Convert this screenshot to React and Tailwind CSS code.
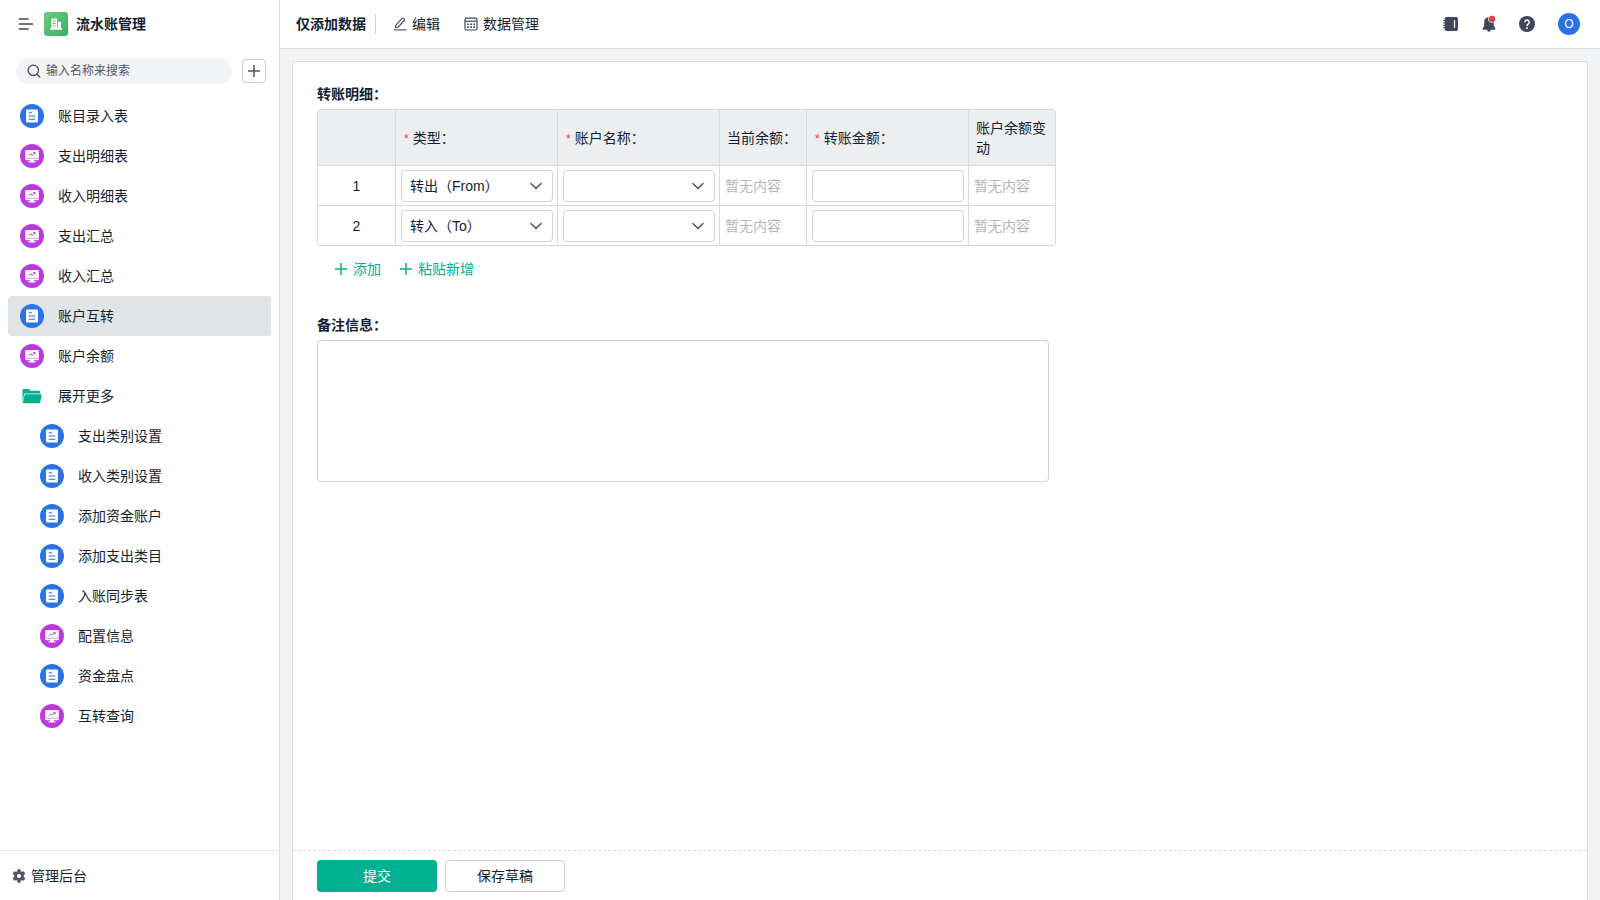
import React from "react";

const menu = [
  { label: "账目录入表", kind: "form" },
  { label: "支出明细表", kind: "board" },
  { label: "收入明细表", kind: "board" },
  { label: "支出汇总", kind: "board" },
  { label: "收入汇总", kind: "board" },
  { label: "账户互转", kind: "form", active: true },
  { label: "账户余额", kind: "board" },
  {
    label: "展开更多",
    kind: "folder",
    children: [
      { label: "支出类别设置", kind: "form" },
      { label: "收入类别设置", kind: "form" },
      { label: "添加资金账户", kind: "form" },
      { label: "添加支出类目", kind: "form" },
      { label: "入账同步表", kind: "form" },
      { label: "配置信息", kind: "board" },
      { label: "资金盘点", kind: "form" },
      { label: "互转查询", kind: "board" },
    ],
  },
];

const rows = [
  { id: 1, type: "转出（From）" },
  { id: 2, type: "转入（To）" },
];

function FormIcon() {
  return (
    <svg viewBox="0 0 24 24" className="size-6 shrink-0" aria-hidden="true">
      <circle cx="12" cy="12" r="12" fill="#2b72e6" />
      <rect x="6" y="5.500" width="12" height="13" rx="1" fill="#fff" />
      <path d="M8.700 8.700h3.300M8.700 12h6.600M8.700 15.300h6.600" stroke="#2b72e6" strokeWidth="1.100" fill="none" />
    </svg>
  );
}

function BoardIcon() {
  return (
    <svg viewBox="0 0 24 24" className="size-6 shrink-0" aria-hidden="true">
      <circle cx="12" cy="12" r="12" fill="#bb3adb" />
      <path
        d="M6.200 6h11.600a1 1 0 0 1 1 1v8.300a1 1 0 0 1-1 1H14v1.200h1.700v1H8.300v-1H10v-1.200H6.200a1 1 0 0 1-1-1V7a1 1 0 0 1 1-1z"
        fill="#fff"
      />
      <path d="M5.200 14.300h13.600" stroke="#bb3adb" strokeWidth=".5" />
      <path d="M8.700 11.700l2.200-1.900 1.500 1.300 2.400-2.300M13.200 8.600h1.900v1.900" stroke="#bb3adb" strokeWidth="1" fill="none" />
    </svg>
  );
}

function FolderIcon() {
  return (
    <svg viewBox="0 0 24 24" className="size-6 shrink-0" aria-hidden="true">
      <path d="M2.500 18V6a1 1 0 0 1 1-1h5.300l1.700 1.800H19a1 1 0 0 1 1 1v1.700H5.200a1.300 1.300 0 0 0-1.200 1z" fill="#00b090" />
      <path d="M5.700 10.300h15a.8.8 0 0 1 .8 1l-1.200 7.200a1 1 0 0 1-1 .8H3.700a.8.8 0 0 1-.8-1l1.700-7.100a1.200 1.200 0 0 1 1.100-.9z" fill="#00b090" />
    </svg>
  );
}

const icons = { form: FormIcon, board: BoardIcon, folder: FolderIcon };

function MenuItem({ item, nested }) {
  const Icon = icons[item.kind];
  return (
    <li>
      <a
        href="#"
        className={
          "flex h-10 items-center gap-3.5 rounded pr-3 " +
          (nested ? "pl-8 " : "pl-3 ") +
          (item.active ? "bg-[#e1e4e7]" : "hover:bg-[#f1f3f4]")
        }
      >
        <Icon />
        <span>{item.label}</span>
      </a>
      {item.children && (
        <ul>
          {item.children.map((child) => (
            <MenuItem key={child.label} item={child} nested />
          ))}
        </ul>
      )}
    </li>
  );
}

function Plus() {
  return (
    <svg viewBox="0 0 14 14" className="size-3.5" aria-hidden="true">
      <path d="M7 1v12M1 7h12" stroke="currentColor" strokeWidth="1.500" fill="none" />
    </svg>
  );
}

function Sidebar() {
  return (
    <aside className="flex w-70 shrink-0 flex-col border-r border-[#dcdfe2] bg-white">
      <div className="flex h-12 items-center pl-4.5">
        <button type="button" aria-label="收起菜单" className="mr-2.5">
          <svg viewBox="0 0 16 16" className="size-4" aria-hidden="true">
            <path d="M1.500 3h8.500M1.500 8h12.800M1.500 13h8.500" stroke="#434659" strokeWidth="1.700" strokeLinecap="round" />
          </svg>
        </button>
        <svg viewBox="0 0 24 24" className="mr-2 size-6" aria-hidden="true">
          <defs>
            <linearGradient id="brand" x1="0" y1="0" x2="1" y2="1">
              <stop offset="0" stopColor="#6bcb7c" />
              <stop offset="1" stopColor="#3fae63" />
            </linearGradient>
          </defs>
          <rect width="24" height="24" rx="3" fill="url(#brand)" />
          <path d="M7.300 6.500h5.900v9.800H14V9.800h3v6.500h1v1.400H6v-1.400h1.300z" fill="#fff" />
          <path d="M8.800 9h2.800M8.800 11.500h2.800M8.800 14h2.800" stroke="#55bd70" strokeWidth="1" />
        </svg>
        <h1 className="font-bold">流水账管理</h1>
      </div>

      <div className="flex items-center gap-2.5 pt-2.5 pr-3.25 pl-4">
        <label className="flex h-6.5 flex-1 items-center gap-1 rounded-full bg-[#f3f4f6] pl-2.5">
          <svg viewBox="0 0 16 16" className="size-4 shrink-0" aria-hidden="true">
            <circle cx="7.300" cy="7.300" r="5.200" fill="none" stroke="#434659" strokeWidth="1.300" />
            <path d="M11.100 11.200l2.700 2.800" stroke="#434659" strokeWidth="1.300" strokeLinecap="round" />
          </svg>
          <input
            type="text"
            aria-label="搜索"
            placeholder="输入名称来搜索"
            className="w-full min-w-0 bg-transparent text-xs outline-none placeholder:text-[#525666]"
          />
        </label>
        <button
          type="button"
          aria-label="新建"
          className="flex size-6 items-center justify-center rounded border border-[#c8cacc] text-[#525666]"
        >
          <Plus />
        </button>
      </div>

      <nav className="flex-1 px-2 pt-3">
        <ul>
          {menu.map((item) => (
            <MenuItem key={item.label} item={item} />
          ))}
        </ul>
      </nav>

      <a href="#" className="flex h-12.5 items-center gap-1.25 border-t border-[#e6e8ea] pl-3">
        <svg viewBox="0 0 14 14" className="size-3.5" aria-hidden="true">
          <path
            fillRule="evenodd"
            fill="#525666"
            d="M5.600.3h2.800l.4 1.900 1.200.7 1.800-.7 1.500 2.500-1.500 1.300v2l1.500 1.300-1.500 2.500-1.800-.7-1.200.7-.4 1.900H5.600l-.4-1.900-1.200-.7-1.800.7L.7 9.300 2.200 8V6L.7 4.700l1.500-2.500 1.800.7 1.200-.7zM7 4.900a2.100 2.100 0 1 0 0 4.200 2.100 2.100 0 0 0 0-4.200z"
          />
        </svg>
        管理后台
      </a>
    </aside>
  );
}

function TopBar() {
  return (
    <header className="flex h-12.25 items-center border-b border-[#e1e4e7] bg-white pr-5 pl-4">
      <h2 className="font-bold">仅添加数据</h2>
      <span className="ml-2.25 h-5 w-px bg-[#d0d3d6]" />
      <button type="button" className="ml-4 flex items-center gap-1">
        <svg viewBox="0 0 16 16" className="size-4" aria-hidden="true">
          <g fill="none" stroke="#434659" strokeWidth="1.100" strokeLinejoin="round">
            <path d="M3.300 11.800l.7-3 6.200-6.400a1.100 1.100 0 0 1 1.600 0l.5.500a1.100 1.100 0 0 1 0 1.600L6.200 11z" />
            <path d="M2 13.900h12.500" />
          </g>
        </svg>
        编辑
      </button>
      <button type="button" className="ml-5.75 flex items-center gap-1">
        <svg viewBox="0 0 16 16" className="size-4" aria-hidden="true">
          <rect x="2" y="2.200" width="12" height="11.800" rx="1.500" fill="none" stroke="#434659" strokeWidth="1.200" />
          <path d="M2 5.200h12" stroke="#434659" strokeWidth="1.200" />
          <path d="M4.100 8.300h7.900M4.100 11.100h7.900" stroke="#434659" strokeWidth="1.600" strokeDasharray="1.700 1.400" />
        </svg>
        数据管理
      </button>

      <div className="ml-auto flex items-center gap-5.75">
        <div className="flex items-center gap-5.5">
          <button type="button" aria-label="通讯录">
            <svg viewBox="0 0 16 16" className="size-4" aria-hidden="true">
              <rect x="1.700" y="1" width="13.300" height="14" rx="2" fill="#434659" />
              <path d="M.2 4.500h2M.2 6.900h2M.2 9.300h2M.2 11.700h2" stroke="#434659" strokeWidth="1" />
              <path d="M11.500 4.200v7.600" stroke="#fff" strokeWidth="1.200" />
            </svg>
          </button>
          <button type="button" aria-label="消息">
            <svg viewBox="0 0 16 16" className="size-4 overflow-visible" aria-hidden="true">
              <path d="M8 1.200c3 0 4.800 2 4.800 4.800v3.800l1.400 2.200v1.800H9.900a1.900 1.900 0 0 1-3.800 0H1.800V12l1.400-2.200V6C3.200 3.200 5 1.200 8 1.200z" fill="#434659" />
              <circle cx="11" cy="3" r="3.800" fill="#fff" />
              <circle cx="11" cy="3" r="3.200" fill="#e8413f" />
            </svg>
          </button>
          <button type="button" aria-label="帮助">
            <svg viewBox="0 0 16 16" className="size-4" aria-hidden="true">
              <circle cx="8" cy="8" r="8" fill="#434659" />
              <path d="M5.800 6.300a2.200 2.200 0 1 1 3.500 1.700c-.8.600-1.300.9-1.300 1.900" stroke="#fff" strokeWidth="1.400" fill="none" />
              <circle cx="8" cy="12" r=".9" fill="#fff" />
            </svg>
          </button>
        </div>
        <button
          type="button"
          aria-label="账号"
          className="flex size-5.5 items-center justify-center rounded-full bg-[#2b72e6] text-xs text-white"
        >
          O
        </button>
      </div>
    </header>
  );
}

function Select({ label, value }) {
  return (
    <span className="relative block">
      <select
        aria-label={label}
        defaultValue={value}
        className="h-8 w-full appearance-none rounded border border-[#cfd2d6] bg-white pr-8 pl-2 outline-none"
      >
        <option value={value}>{value}</option>
      </select>
      <svg viewBox="0 0 12 12" className="pointer-events-none absolute top-2.5 right-2.75 size-3" aria-hidden="true">
        <path d="M1 3.500l5 5 5-5" fill="none" stroke="#434659" strokeWidth="1.300" strokeLinecap="round" />
      </svg>
    </span>
  );
}

function HeadCell({ children, required, className }) {
  return (
    <th
      scope="col"
      className={
        "border-r border-b border-[#d9dcde] text-left font-normal last:border-r-0 " +
        (required ? "pl-2 " : "pl-1.75 ") +
        className
      }
    >
      {required && <span className="mr-1 text-xs text-[#e8413f]">*</span>}
      {children}
    </th>
  );
}

const cell = "h-10 border-r border-b border-[#d9dcde] last:border-r-0 group-last:h-9.75 group-last:border-b-0 ";

function DetailTable() {
  return (
    <div className="w-max overflow-hidden rounded-[3px] border border-[#d9dcde]">
      <table className="table-fixed border-separate border-spacing-0">
        <thead>
          <tr className="h-14 bg-[#edeef0]">
            <td className="w-19.5 border-r border-b border-[#d9dcde]" />
            <HeadCell required className="w-40.5">类型：</HeadCell>
            <HeadCell required className="w-40.5">账户名称：</HeadCell>
            <HeadCell className="w-21.75">当前余额：</HeadCell>
            <HeadCell required className="w-40.5">转账金额：</HeadCell>
            <HeadCell className="w-21.5 pr-2">账户余额变动</HeadCell>
          </tr>
        </thead>
        <tbody>
          {rows.map((row) => (
            <tr key={row.id} className="group">
              <td className={cell + "text-center"}>{row.id}</td>
              <td className={cell + "pr-1 pl-1.25"}>
                <Select label={"类型 " + row.id} value={row.type} />
              </td>
              <td className={cell + "pr-1 pl-1.25"}>
                <Select label={"账户名称 " + row.id} value="" />
              </td>
              <td className={cell + "pl-1.25 text-[#b4b6ba]"}>暂无内容</td>
              <td className={cell + "pr-1 pl-1.25"}>
                <input
                  type="text"
                  aria-label={"转账金额 " + row.id}
                  className="block h-8 w-full rounded border border-[#cfd2d6] px-2 outline-none"
                />
              </td>
              <td className={cell + "pl-1.25 text-[#b4b6ba]"}>暂无内容</td>
            </tr>
          ))}
        </tbody>
      </table>
    </div>
  );
}

export default function App() {
  return (
    <div className="flex min-h-screen bg-[#f1f3f5] font-['Liberation_Sans','Noto_Sans_CJK_SC',sans-serif] text-sm leading-5 text-[#141e31]">
      <Sidebar />
      <div className="flex min-w-0 flex-1 flex-col">
        <TopBar />
        <main className="flex flex-1 flex-col px-3 pt-3">
          <form className="flex flex-1 flex-col rounded-t border border-b-0 border-[#d9dcde] bg-white">
            <div className="flex-1 px-6 pt-5.5">
              <h3 className="mb-1.25 font-bold">转账明细：</h3>
              <DetailTable />
              <div className="mt-3.25 flex gap-4.5 pl-4.25 text-[#00b090]">
                <button type="button" className="flex items-center gap-1.25">
                  <Plus />
                  添加
                </button>
                <button type="button" className="flex items-center gap-1.25">
                  <Plus />
                  粘贴新增
                </button>
              </div>
              <label htmlFor="remark" className="mt-9 mb-1.25 block font-bold">
                备注信息：
              </label>
              <textarea
                id="remark"
                className="block h-35.5 w-full max-w-183 resize-none rounded border border-[#cfd2d6] px-2 py-1 outline-none"
              />
            </div>
            <div className="flex h-12.5 items-center gap-2 border-t border-dashed border-[#d9dcde] px-6">
              <button type="submit" className="h-8 w-30 rounded bg-[#00b090] text-white">
                提交
              </button>
              <button type="button" className="h-8 w-30 rounded border border-[#cfd2d6] bg-white">
                保存草稿
              </button>
            </div>
          </form>
        </main>
      </div>
    </div>
  );
}
